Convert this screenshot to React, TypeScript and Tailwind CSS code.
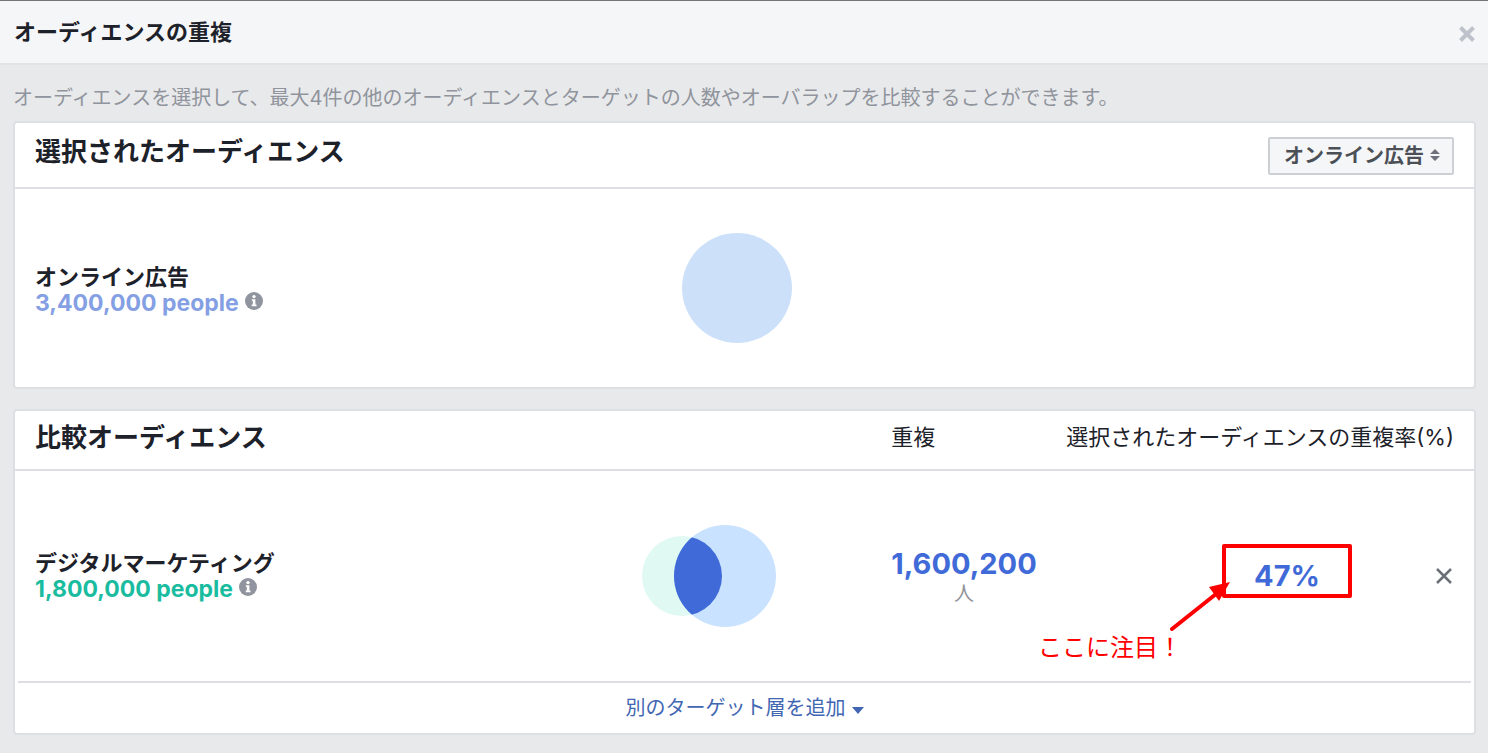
import React, { useState } from 'react';

interface Audience {
  name: string;
  people: string;
}

interface Comparison extends Audience {
  overlap: string;
  rate: string;
}

const selected: Audience = { name: 'オンライン広告', people: '3,400,000' };

const comparisons: Comparison[] = [
  { name: 'デジタルマーケティング', people: '1,800,000', overlap: '1,600,200', rate: '47%' },
];

const InfoIcon = () => (
  <svg className="w-[18px] h-[18px] mb-1 shrink-0" viewBox="0 0 18 18" aria-hidden="true">
    <circle cx="9" cy="9" r="9" fill="#8f949e" />
    <circle cx="9" cy="4.6" r="1.7" fill="#fff" />
    <path d="M6.8 7.2h3.6v5.4h1.1v1.6H6.7v-1.6h1.1V8.8h-1z" fill="#fff" />
  </svg>
);

const AudienceLabel: React.FC<{ audience: Audience; color: string }> = ({ audience, color }) => (
  <div className="text-[22px] leading-[26px] font-bold">
    <p>{audience.name}</p>
    <p className={`flex items-center gap-1.5 text-[23px] leading-[26px] ${color}`}>
      {audience.people} people
      <InfoIcon />
    </p>
  </div>
);

// Two audiences and their shared part
const VennDiagram = () => (
  <svg className="mx-auto w-[136px] h-[102px]" viewBox="0 0 136 102" role="img" aria-label="重複">
    <defs>
      <clipPath id="large">
        <circle cx="85" cy="51" r="51" />
      </clipPath>
    </defs>
    <circle cx="42" cy="51" r="40" fill="#e1f9f3" />
    <circle cx="85" cy="51" r="51" fill="#c8e2ff" />
    <circle cx="42" cy="51" r="40" fill="#3f6ad8" clipPath="url(#large)" />
  </svg>
);

// Red callout around the overlap rate
const Callout = () => (
  <div className="absolute inset-x-0 -top-4 h-[54px] border-4 border-[#fe0000] rounded-xs pointer-events-none">
    <svg className="absolute -left-14 top-8 w-[62px] h-[52px]" viewBox="0 0 62 52" aria-hidden="true">
      <path d="M2 49 46 14" stroke="#fe0000" strokeWidth="4" strokeLinecap="round" />
      <path d="M60 2 39 7 49 21z" fill="#fe0000" />
    </svg>
    <p className="absolute -left-[188px] top-[84px] text-2xl font-normal text-[#fe0000] whitespace-nowrap">
      ここに注目！
    </p>
  </div>
);

export default function App() {
  const [source, setSource] = useState(selected.name);

  return (
    <div className="min-h-screen bg-[#e8e9eb] text-[#1d2129] font-['Inter','Noto_Sans_CJK_JP',sans-serif]">
      {/* Header */}
      <header className="flex items-center justify-between h-[65px] pl-3.5 pr-3 bg-[#f5f6f8] border-t border-t-[#757578] border-b-2 border-b-[#e1e3e5]">
        <h1 className="text-[22px] leading-8 font-bold">オーディエンスの重複</h1>
        <button type="button" aria-label="閉じる" className="pt-1">
          <svg className="w-[18px] h-[18px]" viewBox="0 0 18 18">
            <path d="M2.500 2.500l13 13M15.500 2.500l-13 13" stroke="#bec2ca" strokeWidth="4" />
          </svg>
        </button>
      </header>

      <main className="pl-[13px] pr-3 pt-[17px] pb-[18px]">
        <p className="mb-[7px] text-xl leading-8 text-[#90949c]">
          オーディエンスを選択して、最大4件の他のオーディエンスとターゲットの人数やオーバラップを比較することができます。
        </p>

        {/* Selected audience */}
        <section className="mb-5 bg-white border-2 border-[#dddfe2] rounded">
          <div className="flex items-start justify-between h-[66px] px-5 border-b-2 border-[#dddfe2]">
            <h2 className="pt-[13px] text-[26px] leading-8 font-bold">選択されたオーディエンス</h2>
            <label className="relative mt-3.5">
              <select
                aria-label="オーディエンス"
                value={source}
                onChange={(e) => setSource(e.target.value)}
                className="block appearance-none w-[186px] h-[38px] pl-3.5 pr-6 bg-[#f5f6f8] border-2 border-[#ccd0d5] rounded-xs text-xl leading-8 font-bold text-[#4b4f56]"
              >
                <option>オンライン広告</option>
              </select>
              <svg className="absolute right-3.5 top-3 w-2.5 h-3 pointer-events-none" viewBox="0 0 10 12" aria-hidden="true">
                <path d="M5 0 10 5H0zM5 12l5-5H0z" fill="#6d727c" />
              </svg>
            </label>
          </div>
          <div className="flex items-center h-[198px]">
            <div className="w-[37%] pl-5 pt-1">
              <AudienceLabel audience={selected} color="text-[#859fe4]" />
            </div>
            <div className="w-1/4">
              <svg className="mx-auto w-[110px] h-[110px]" viewBox="0 0 110 110" aria-hidden="true">
                <circle cx="55" cy="55" r="55" fill="#cce1f9" />
              </svg>
            </div>
          </div>
        </section>

        {/* Compared audiences */}
        <section className="bg-white border-2 border-[#dddfe2] rounded">
          <table className="w-full table-fixed text-left">
            <colgroup>
              <col className="w-[37%]" />
              <col className="w-[21%]" />
              <col className="w-[12%]" />
              <col />
              <col className="w-[122px]" />
            </colgroup>
            <thead>
              <tr className="h-[59px] border-b-2 border-[#dddfe2] text-[22px] leading-8">
                <th colSpan={2} className="pl-5 pb-1 text-[26px] font-bold">比較オーディエンス</th>
                <th className="pl-[30px] pb-1.5 font-normal">重複</th>
                <th colSpan={2} className="pr-5 pb-1.5 font-normal text-right whitespace-nowrap">
                  選択されたオーディエンスの重複率(%)
                </th>
              </tr>
            </thead>
            <tbody>
              {comparisons.map((row) => (
                <tr key={row.name} className="h-[211px]">
                  <td className="pl-5">
                    <AudienceLabel audience={row} color="text-[#1abc9f]" />
                  </td>
                  <td>
                    <VennDiagram />
                  </td>
                  <td className="pl-[30px] pt-1">
                    <div className="w-fit text-center">
                      <p className="text-[29px] leading-8 font-bold text-[#3f6ad8]">{row.overlap}</p>
                      <p className="text-xl leading-7 text-[#90949c]">人</p>
                    </div>
                  </td>
                  <td>
                    <div className="relative ml-auto w-[130px] text-center text-[29px] leading-8 font-bold text-[#3f6ad8]">
                      {row.rate}
                      <Callout />
                    </div>
                  </td>
                  <td className="pr-5 pb-1 text-right">
                    <button type="button" aria-label="削除" className="align-middle">
                      <svg className="w-5 h-5" viewBox="0 0 20 20">
                        <path d="M3 3l14 14M17 3 3 17" stroke="#6b7078" strokeWidth="2.500" />
                      </svg>
                    </button>
                  </td>
                </tr>
              ))}
            </tbody>
          </table>
          <div className="flex justify-center mx-[3px] h-[52px] border-t-2 border-[#dddfe2]">
            <button type="button" className="flex items-center gap-1.5 text-xl leading-8 text-[#4267b2]">
              別のターゲット層を追加
              <svg className="mt-1 w-3 h-2" viewBox="0 0 12 8" aria-hidden="true">
                <path d="M0 1h12L6 8z" fill="#4267b2" />
              </svg>
            </button>
          </div>
        </section>
      </main>
    </div>
  );
}
